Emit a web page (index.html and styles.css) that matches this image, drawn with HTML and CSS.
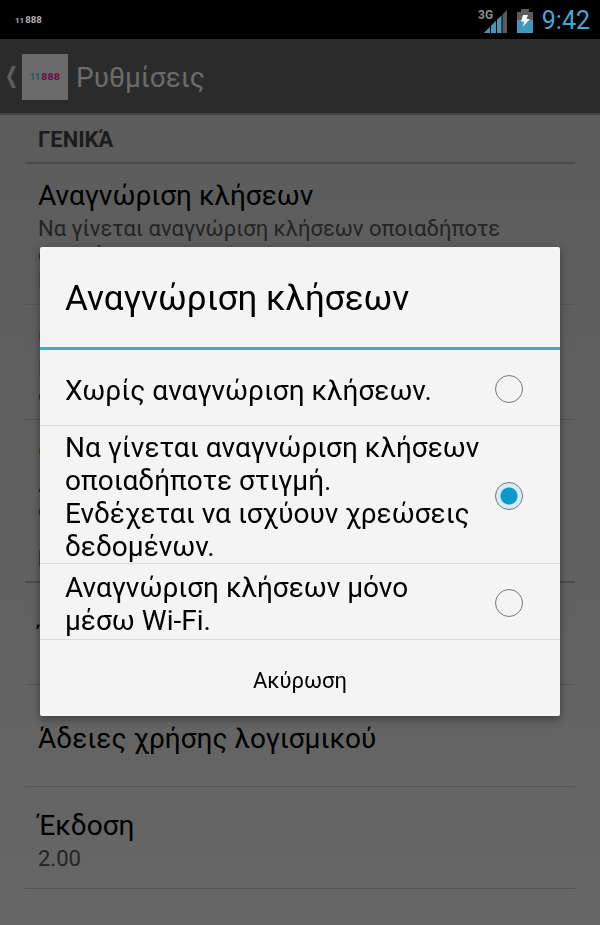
FILE: index.html
```
<!DOCTYPE html>
<html lang="el">
<head>
    <meta charset="UTF-8">
    <meta name="viewport" content="width=device-width, initial-scale=1.0">
    <title>Ρυθμίσεις</title>
    <link rel="stylesheet" href="styles.css">
</head>
<body>
    <div class="status-bar">
        <span class="notification"><span class="eleven">11</span>888</span>
        <div class="status-icons">
            <svg class="signal" width="30" height="28" viewBox="0 0 30 28">
                <text class="network" x="0" y="12">3G</text>
                <path d="M6 26L29 3V26Z" fill="#5a5a5a"/>
                <path d="M6 26L24 8V26Z" fill="#4198b8"/>
                <path d="M12.5 13V26M18.5 9V26M24 5V26" stroke="#000" stroke-width="1"/>
            </svg>
            <svg class="battery" width="16" height="24" viewBox="0 0 16 24">
                <path d="M0 3H4V0H12V3H16V12H0Z" fill="#5c5c5c"/>
                <path d="M0 11H16V24H0Z" fill="#4198b8"/>
                <path d="M6 6H11L9.500 10H13L5.500 18L7.500 12.500H4Z" fill="#fff"/>
            </svg>
            <span class="clock">9:42</span>
        </div>
    </div>

    <header class="action-bar">
        <svg class="back" width="10" height="24" viewBox="0 0 10 24">
            <path d="M6 1H10L5 12L10 23H6L1 12Z" fill="#5c5c5c"/>
        </svg>
        <div class="app-icon"><span class="eleven teal">11</span><span class="pink">888</span></div>
        <h1>Ρυθμίσεις</h1>
    </header>

    <main class="settings">
        <h2>ΓΕΝΙΚΆ</h2>
        <div class="item">
            <div class="item-title">Αναγνώριση κλήσεων</div>
            <div class="item-summary">Να γίνεται αναγνώριση κλήσεων οποιαδήποτε στιγμή.<br>Ενδέχεται να ισχύουν χρεώσεις δεδομένων.</div>
        </div>
        <div class="item">
            <div class="item-title">Οθόνη</div>
            <div class="item-summary">Επιλογή<br>σύνδεσης</div>
        </div>
        <div class="item">
            <div class="item-title">Ομάδα</div>
            <div class="item-summary">Αναζήτηση<br>ονομάτων</div>
        </div>
        <h2>ΠΛΗΡΟΦΟΡΊΕΣ</h2>
        <div class="item">
            <div class="item-title">Έλεγχος</div>
        </div>
        <div class="item">
            <div class="item-title">Άδειες χρήσης λογισμικού</div>
        </div>
        <div class="item">
            <div class="item-title">Έκδοση</div>
            <div class="item-summary">2.00</div>
        </div>
    </main>

    <div class="overlay">
        <form class="dialog" role="dialog" aria-labelledby="dialog-title">
            <h2 class="dialog-title" id="dialog-title">Αναγνώριση κλήσεων</h2>
            <label class="option" for="mode-off">
                <span>Χωρίς αναγνώριση κλήσεων.</span>
                <input type="radio" name="mode" id="mode-off">
            </label>
            <label class="option" for="mode-always">
                <span>Να γίνεται αναγνώριση κλήσεων οποιαδήποτε στιγμή.<br>Ενδέχεται να ισχύουν χρεώσεις δεδομένων.</span>
                <input type="radio" name="mode" id="mode-always" checked>
            </label>
            <label class="option" for="mode-wifi">
                <span>Αναγνώριση κλήσεων μόνο μέσω Wi-Fi.</span>
                <input type="radio" name="mode" id="mode-wifi">
            </label>
            <button type="button" class="cancel">Ακύρωση</button>
        </form>
    </div>
</body>
</html>
```
FILE: styles.css
```
* {
    box-sizing: border-box;
}
body {
    margin: 0;
    min-height: 100vh;
    display: flex;
    flex-direction: column;
    font-family: Roboto, "Noto Sans", sans-serif;
    background-color: #666;
    color: #000;
}
h1, h2 {
    margin: 0;
}

/* Status bar */
.status-bar {
    height: 39px;
    padding: 2px 10px 0 15px;
    display: flex;
    justify-content: space-between;
    align-items: center;
    background-color: #000;
}
.notification {
    font-family: "DejaVu Sans", sans-serif;
    font-size: 8px;
    font-weight: 700;
    color: #b0b0b0;
}
.eleven {
    margin-right: 1px;
    font-family: Roboto, sans-serif;
}
.status-icons {
    display: flex;
    align-items: center;
    gap: 9px;
}
.network {
    font-size: 12px;
    font-weight: 700;
    fill: #8c8c8c;
}
.clock {
    font-size: 25px;
    color: #43a9d2;
}

/* Action bar */
.action-bar {
    height: 76px;
    padding: 2px 6px 0;
    display: flex;
    align-items: center;
    background-color: #2b2b2b;
    color: #6b6b6b;
    border-bottom: 2px solid #444;
}
.app-icon {
    width: 46px;
    height: 46px;
    margin: 0 8px 0 6px;
    display: flex;
    justify-content: center;
    align-items: center;
    background-color: #6b6b6b;
    border-radius: 1px;
    font-family: "DejaVu Sans", sans-serif;
    font-size: 9px;
    font-weight: 700;
}
.teal {
    color: #125b66;
}
.pink {
    color: #6b0d45;
}
.action-bar h1 {
    font-size: 28px;
    font-weight: 400;
    line-height: 33px;
}

/* Preference list */
.settings {
    flex: 1;
    padding: 0 25px;
    background: linear-gradient(#5c5c5c, #666);
}
.settings h2 {
    height: 49px;
    padding: 0 13px;
    border-bottom: 2px solid #4a4a4a;
    font-size: 22px;
    line-height: 50px;
    color: #1c1c1c;
}
.item {
    min-height: 102px;
    padding: 15px 13px 10px;
    display: flex;
    flex-direction: column;
    justify-content: center;
    border-bottom: 1px solid #555;
}
.item:has(+ h2) {
    border-bottom: none;
}
.item-title {
    font-size: 28px;
    line-height: 33px;
}
.item-summary {
    margin-top: 4px;
    font-size: 22px;
    line-height: 26px;
    color: #242424;
}

/* Dialog */
.overlay {
    position: fixed;
    inset: 38px 0 0;
    padding: 0 40px;
    display: flex;
    align-items: center;
}
.dialog {
    width: 100%;
    background-color: #f4f4f4;
    border-radius: 2px;
    box-shadow: 0 3px 8px rgba(0, 0, 0, 0.4);
}
.dialog-title {
    padding: 32px 25px 28px;
    border-bottom: 3px solid #3fa9d8;
    font-size: 35px;
    font-weight: 400;
    line-height: 40px;
}
.option {
    min-height: 76px;
    padding: 5px 37px 0 25px;
    display: flex;
    justify-content: space-between;
    align-items: center;
    gap: 12px;
    border-bottom: 1px solid #d9d9d9;
    font-size: 28px;
    line-height: 33px;
}
.option input {
    appearance: none;
    flex: none;
    width: 28px;
    height: 28px;
    margin: 0 0 3px;
    border: 1px solid #777;
    border-radius: 50%;
}
.option input:checked {
    background: radial-gradient(circle, #0f98cb 8px, #d3effa 9px);
}
.cancel {
    display: block;
    width: 100%;
    height: 76px;
    padding: 4px 0 0;
    border: none;
    background: none;
    font-family: inherit;
    font-size: 22px;
    color: #000;
    cursor: pointer;
}
```
